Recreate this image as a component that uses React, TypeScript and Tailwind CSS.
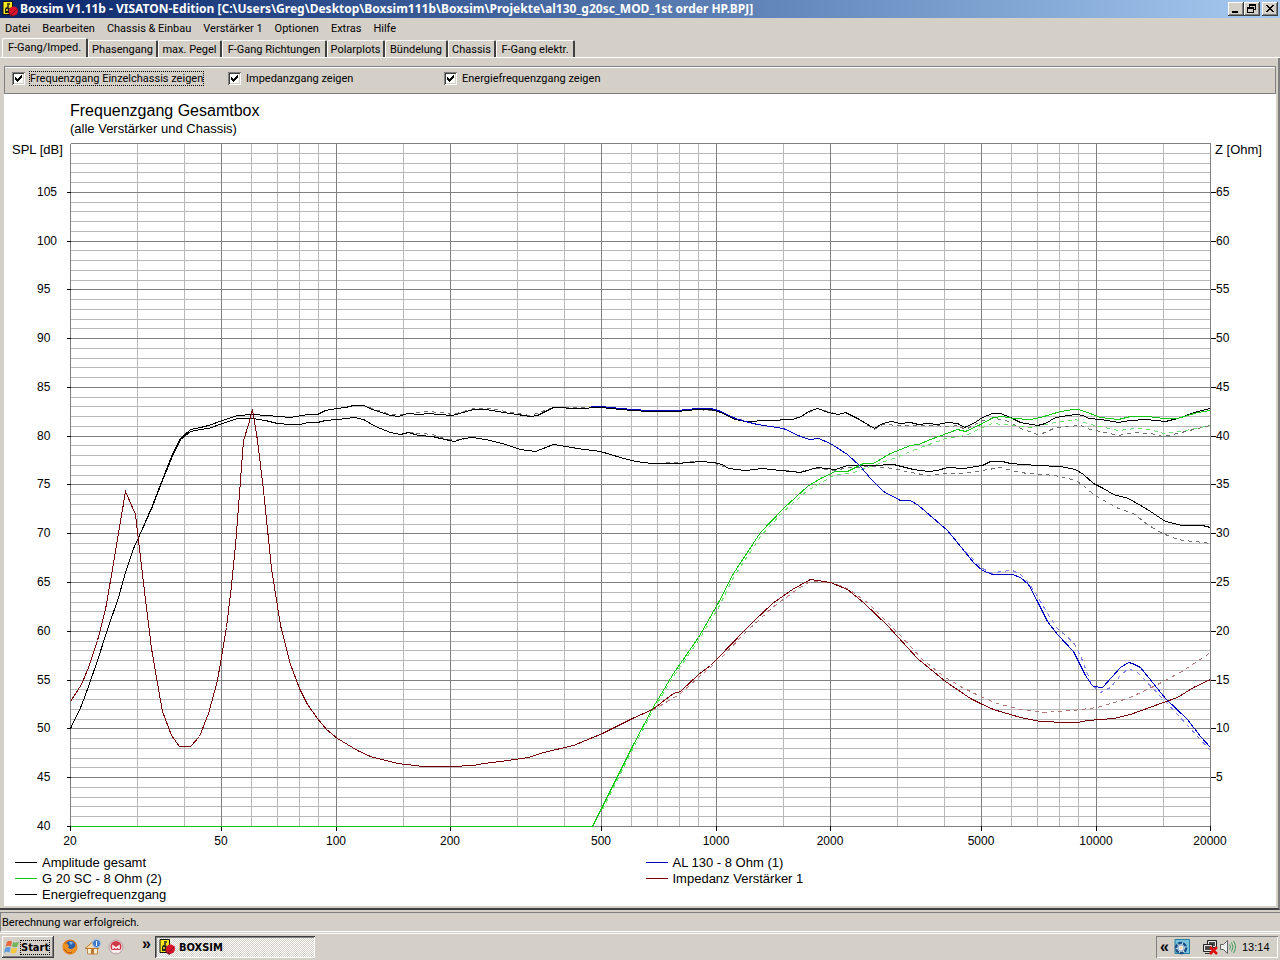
import { useState } from 'react';
import type { ReactNode } from 'react';

const MENU = ['Datei', 'Bearbeiten', 'Chassis & Einbau', 'Verstärker 1', 'Optionen', 'Extras', 'Hilfe'];

const TABS = [
  { label: 'F-Gang/Imped.', width: 'w-[86px]' },
  { label: 'Phasengang', width: 'w-[70px]' },
  { label: 'max. Pegel', width: 'w-[64px]' },
  { label: 'F-Gang Richtungen', width: 'w-[105px]' },
  { label: 'Polarplots', width: 'w-[58px]' },
  { label: 'Bündelung', width: 'w-[63px]' },
  { label: 'Chassis', width: 'w-[48px]' },
  { label: 'F-Gang elektr.', width: 'w-[79px]' },
];

// plot area inside the svg
const LEFT = 70;
const RIGHT = 1210;
const TOP = 143;
const BOTTOM = 826;

const freqToX = (f: number) => Math.round(LEFT + ((RIGHT - LEFT) / 3) * Math.log10(f / 20));
const dbToY = (db: number) => Math.round(BOTTOM - ((BOTTOM - TOP) / 70) * (db - 40));

const MAJOR_FREQS = [20, 50, 100, 200, 500, 1000, 2000, 5000, 10000, 20000];
const MINOR_FREQS = [
  30, 40, 60, 70, 80, 90, 150, 300, 400, 600, 700, 800, 900,
  1500, 3000, 4000, 6000, 7000, 8000, 9000, 15000,
];
const DB_LINES = Array.from({ length: 71 }, (_, i) => 40 + i);

const CURVES = {
  amplitude:
    '70,728 81,705 88,686 97,660 107,629 118,597 125,572 133,548 139,535 152,505 162,479 171,456 180,438 190,429 200,427 208,425 222,420 237,415 252,414 267,415 290,417 307,414 317,414 325,410 337,408 345,407 353,405 363,405 372,409 390,415 398,416 407,413 420,414 427,413 452,415 473,409 485,409 510,413 530,416 537,415 553,407 577,408 600,407 620,409 647,411 677,411 697,409 710,409 718,411 735,419 745,421 768,420 792,419 801,416 808,411 817,408 828,412 838,414 845,412 857,418 874,428 882,423 891,421 900,423 910,422 918,424 928,423 937,424 947,422 957,423 964,427 973,423 982,417 992,413 1000,413 1010,417 1020,422 1037,425 1045,423 1055,417 1075,414 1083,415 1088,418 1100,419 1118,422 1130,420 1145,419 1165,421 1177,418 1197,411 1210,408',
  amplitudeSim:
    '345,407 353,405 363,405 372,408 390,414 400,414 407,413 427,411 440,412 452,414 473,408 490,408 510,412 530,415 553,407 577,407 600,407 620,408 647,411 697,409 718,411 745,421 792,419 817,408 838,414 845,412 857,418 874,429 882,424 900,425 928,425 950,426 957,425 965,429 975,424 982,420 992,418 1003,419 1010,422 1020,428 1037,434 1045,432 1055,427 1080,425 1090,429 1100,431 1118,435 1135,432 1150,433 1163,436 1177,433 1197,428 1210,425',
  energy:
    '70,728 81,705 88,686 97,660 107,629 118,597 125,572 133,548 139,535 152,506 162,480 171,458 180,439 190,431 200,429 208,428 222,423 237,418 252,418 265,420 277,423 290,424 300,424 307,422 317,422 325,420 337,419 354,417 363,419 375,426 390,432 400,434 408,432 418,435 432,436 440,438 454,441 463,438 472,437 485,439 502,443 520,449 535,451 553,444 577,448 600,451 620,457 635,461 652,463 677,463 700,461 713,462 722,464 728,468 745,470 762,468 780,470 800,472 817,467 835,469 847,465 873,465 893,464 913,469 928,471 937,470 947,467 963,468 982,465 990,461 1002,461 1010,463 1037,465 1060,466 1075,469 1083,474 1093,483 1103,488 1113,494 1128,498 1147,509 1165,521 1182,525 1202,525 1210,527',
  energySim:
    '408,432 432,434 440,437 454,440 472,437 485,439 502,443 520,449 535,451 553,444 577,448 600,451 620,457 635,461 652,463 700,461 713,462 728,468 745,470 762,468 780,470 800,471 817,468 835,470 847,467 873,466 893,468 910,472 928,475 945,473 963,473 982,470 1000,467 1015,471 1027,473 1045,474 1060,476 1075,480 1083,485 1093,494 1105,501 1118,508 1133,513 1147,524 1160,532 1172,537 1182,540 1195,541 1210,543',
  woofer:
    '590,406 600,406 620,408 647,410 677,410 697,408 710,408 718,410 735,418 745,421 757,424 783,428 800,436 809,439 818,438 830,443 847,454 860,466 870,478 883,491 900,500 910,500 918,505 947,530 965,552 973,562 982,570 992,574 1012,574 1020,577 1028,584 1037,601 1047,621 1057,634 1073,651 1085,675 1091,684 1093,686 1102,687 1120,667 1128,662 1132,663 1140,667 1165,698 1187,719 1200,736 1210,747',
  wooferSim:
    '965,551 982,568 992,573 1000,571 1012,570 1020,574 1028,582 1037,596 1047,613 1057,628 1073,642 1080,655 1091,684 1100,692 1110,687 1120,675 1128,668 1137,672 1165,701 1187,725 1210,750',
  tweeter:
    '70,826 592,826 602,806 615,780 632,746 652,708 673,673 698,637 717,604 733,573 760,532 783,508 807,486 820,478 835,471 847,471 863,463 873,463 890,453 910,445 918,444 930,439 957,429 965,431 980,424 993,417 1002,416 1013,418 1030,419 1040,417 1060,411 1073,409 1078,409 1087,412 1100,417 1118,419 1130,416 1148,416 1163,418 1177,418 1197,412 1210,410',
  tweeterSim:
    '602,809 632,749 652,711 673,676 698,640 717,609 733,577 760,536 783,511 807,490 835,474 850,473 873,465 893,458 915,449 945,438 965,435 980,428 992,423 1013,425 1030,427 1055,422 1075,419 1090,424 1118,430 1135,428 1150,429 1163,433 1185,430 1210,425',
  impedance:
    '70,701 81,684 88,667 97,640 105,609 113,563 119,527 125,491 135,514 138,540 144,591 151,648 157,683 162,711 171,735 179,746 190,746 199,736 208,713 217,680 226,627 231,585 235,545 239,493 243,440 248,424 252,409 257,440 263,490 271,568 280,625 290,664 299,688 307,704 317,718 326,729 337,738 357,750 370,756 397,763 423,766 450,766 473,765 483,763 500,761 528,757 543,752 573,745 602,733 632,718 652,709 673,693 680,691 698,674 710,665 717,658 747,627 753,621 772,603 792,589 810,579 830,582 847,589 863,602 887,625 917,658 945,681 970,698 982,704 993,709 1020,717 1040,721 1067,722 1077,722 1087,720 1113,718 1130,714 1163,702 1177,697 1193,687 1210,679',
  impedanceSim:
    '652,710 680,693 698,677 717,661 747,630 772,607 795,590 810,581 830,582 847,588 868,603 900,635 923,660 945,677 960,686 982,697 997,703 1020,709 1043,712 1073,710 1097,707 1127,698 1147,689 1163,681 1183,670 1210,652',
};

const RAISED = 'shadow-[inset_-1px_-1px_#404040,inset_1px_1px_#fff,inset_-2px_-2px_#808080]';

function Curve({ points, color, dashed = false }: { points: string; color: string; dashed?: boolean }) {
  return <polyline points={points} fill="none" stroke={color} strokeDasharray={dashed ? '4 4' : undefined} />;
}

function Chart({ chassis, impedance, energy }: { chassis: boolean; impedance: boolean; energy: boolean }) {
  return (
    <svg viewBox="4 139 1272 715" className="block w-full" role="img" aria-label="Frequenzgang Gesamtbox">
      <g transform="translate(0.5 0.5)" shapeRendering="crispEdges">
        {DB_LINES.filter((db) => db % 5 !== 0).map((db) => (
          <line key={db} x1={LEFT} x2={RIGHT} y1={dbToY(db)} y2={dbToY(db)} stroke="#b8b8b8" />
        ))}
        {MINOR_FREQS.map((f) => (
          <line key={f} x1={freqToX(f)} x2={freqToX(f)} y1={TOP} y2={BOTTOM} stroke="#b8b8b8" />
        ))}
        {DB_LINES.filter((db) => db % 5 === 0).map((db) => (
          <line key={db} x1={LEFT} x2={RIGHT} y1={dbToY(db)} y2={dbToY(db)} stroke="#808080" />
        ))}
        {MAJOR_FREQS.map((f) => (
          <line key={f} x1={freqToX(f)} x2={freqToX(f)} y1={TOP} y2={BOTTOM} stroke="#808080" />
        ))}

        {/* axis ticks */}
        {DB_LINES.filter((db) => db % 5 === 0 && db < 110).map((db) => (
          <g key={db} stroke="#000">
            <line x1={LEFT - 4} x2={LEFT} y1={dbToY(db)} y2={dbToY(db)} />
            {db > 40 && <line x1={RIGHT} x2={RIGHT + 5} y1={dbToY(db)} y2={dbToY(db)} />}
          </g>
        ))}
        {MAJOR_FREQS.map((f) => (
          <line key={f} x1={freqToX(f)} x2={freqToX(f)} y1={BOTTOM - 1} y2={BOTTOM + 4} stroke="#000" />
        ))}

        {impedance && <Curve points={CURVES.impedanceSim} color="#b87878" dashed />}
        {chassis && <Curve points={CURVES.tweeterSim} color="#70e070" dashed />}
        {chassis && <Curve points={CURVES.wooferSim} color="#8080e8" dashed />}
        {energy && <Curve points={CURVES.energySim} color="#707070" dashed />}
        <Curve points={CURVES.amplitudeSim} color="#707070" dashed />
        {energy && <Curve points={CURVES.energy} color="#000" />}
        <Curve points={CURVES.amplitude} color="#000" />
        {chassis && <Curve points={CURVES.tweeter} color="#10c810" />}
        {chassis && <Curve points={CURVES.woofer} color="#0000c0" />}
        {impedance && <Curve points={CURVES.impedance} color="#780008" />}
      </g>

      <g className="font-['Liberation_Sans'] text-[12px]">
        <text x={12} y={154} className="text-[13px]">SPL [dB]</text>
        <text x={1215} y={154} className="text-[13px]">Z [Ohm]</text>
        {DB_LINES.filter((db) => db % 5 === 0 && db < 110).map((db) => (
          <text key={db} x={37} y={dbToY(db) + 4}>{db}</text>
        ))}
        {DB_LINES.filter((db) => db % 5 === 0 && db > 40 && db < 110).map((db) => (
          <text key={db} x={1216} y={dbToY(db) + 4}>{db - 40}</text>
        ))}
        {MAJOR_FREQS.map((f) => (
          <text key={f} x={freqToX(f)} y={845} textAnchor="middle">{f}</text>
        ))}
      </g>
    </svg>
  );
}

function CheckOption({ label, checked, onChange, focused = false }: {
  label: string;
  checked: boolean;
  onChange: (value: boolean) => void;
  focused?: boolean;
}) {
  return (
    <label className="flex w-[216px] items-center gap-1">
      <span className="relative size-[13px]">
        <input
          type="checkbox"
          checked={checked}
          onChange={(e) => onChange(e.target.checked)}
          className="block size-[13px] appearance-none bg-white shadow-[inset_1px_1px_#808080,inset_-1px_-1px_#fff,inset_2px_2px_#404040,inset_-2px_-2px_#d4d0c8]"
        />
        {checked && (
          <svg viewBox="0 0 13 13" className="pointer-events-none absolute inset-0 size-[13px]" shapeRendering="crispEdges">
            <path d="M3 5v3l2 2 5-5V2L5 7z" />
          </svg>
        )}
      </span>
      <span className={focused ? 'border border-dotted border-black whitespace-nowrap' : 'border border-transparent whitespace-nowrap'}>
        {label}
      </span>
    </label>
  );
}

function LegendItem({ color, children }: { color: string; children: ReactNode }) {
  return (
    <li className="flex h-4 items-center gap-[5px]">
      <span className={`h-px w-[22px] ${color}`} />
      {children}
    </li>
  );
}

function BoxsimIcon() {
  return (
    <svg viewBox="0 0 16 16" className="size-4 shrink-0">
      <path d="M1 .5h9.500v13H1z" fill="#f4e81c" stroke="#111" />
      <path d="M5 3h3M5 5h2" stroke="#222" strokeWidth="1.500" />
      <path d="M3 8q0-2 2.500-2T8 8l-1 4H3z" fill="#222" />
      <path d="M4 9h2M5 8v2" stroke="#f4e81c" />
      <path d="M6 12l4-4 3 6-3 2z" fill="#7a1020" />
      <circle cx="11.500" cy="10" r="4.500" fill="#d8142c" />
      <path d="M8.500 14.500l7-7" stroke="#8c0c1c" />
    </svg>
  );
}

function WindowsFlag() {
  return (
    <svg viewBox="0 0 16 16" className="size-4 shrink-0">
      <path d="M3 3q2-2 5-.5L7 7.500Q4.500 6 1.500 8z" fill="#e8683c" />
      <path d="M9 3q3 1.500 6-.5l-1.500 5Q11 9 8 7.500z" fill="#74b45c" />
      <path d="M1.200 9Q4 7.200 6.700 8.500L5.500 13.500Q3 12 0 14z" fill="#5c9cdc" />
      <path d="M7.800 8.700q3 1.500 5.500 0L12 13.500q-2.500 2-5.500.3z" fill="#f4c83c" />
    </svg>
  );
}

function FirefoxIcon() {
  return (
    <svg viewBox="0 0 16 16" className="size-4">
      <circle cx="8" cy="8" r="7.500" fill="#e07818" />
      <circle cx="8.500" cy="7" r="5" fill="#2860b0" />
      <path d="M7 3q3-1 4 1l-2 2z" fill="#78b8ec" />
      <path d="M.8 4L3 5l2-.5L7 7 6 8.500Q8 11 11.500 9q3-2 2-5 3 4 .5 8-3 4-8 3-6-2-5.200-11z" fill="#f09020" />
      <path d="M2 10q3 5 8 4" stroke="#b84810" fill="none" />
    </svg>
  );
}

function HomeIcon() {
  return (
    <svg viewBox="0 0 16 16" className="size-4">
      <path d="M2.500 8h10v7h-10z" fill="#f8ecd0" stroke="#c08848" />
      <path d="M0 9.500L7.500 3l6 6.500z" fill="#f4d8a8" stroke="#c07830" />
      <path d="M6 10h3v5H6z" fill="#b87838" />
      <circle cx="11.500" cy="4.500" r="4" fill="#4078c8" stroke="#a8c4e8" />
      <path d="M11.500 2v5" stroke="#fff" />
    </svg>
  );
}

function MailIcon() {
  return (
    <svg viewBox="0 0 16 16" className="size-4">
      <circle cx="8" cy="8" r="7" fill="#f0e0e0" stroke="#b8a0a4" />
      <circle cx="8" cy="7.500" r="5.500" fill="#d03848" />
      <path d="M5 10V7l3 2 3-2v3" fill="none" stroke="#fff" strokeWidth="1.500" />
      <path d="M4 12h8" stroke="#f8f0f0" strokeWidth="2" />
    </svg>
  );
}

function TrayToolIcon() {
  return (
    <svg viewBox="0 0 16 16" className="size-4">
      <path d="M1 .5h14.500v14H1z" fill="#78c4dc" stroke="#287ca0" />
      <circle cx="7" cy="9" r="5" fill="#f4f4f4" stroke="#1c5088" strokeWidth="2.500" strokeDasharray="4 1" />
      <circle cx="7" cy="9" r="3" fill="none" stroke="#88a8c8" />
      <circle cx="7" cy="9" r="1.500" fill="#f0d0b0" />
    </svg>
  );
}

function NetworkIcon() {
  return (
    <svg viewBox="0 0 16 16" className="size-4">
      <path d="M5.500 1.500h9v7h-9z" fill="#484848" stroke="#222" />
      <path d="M6.500 2.500h7v5h-7z" fill="none" stroke="#eee" />
      <path d="M1.500 5.500h9v7h-9z" fill="#484848" stroke="#222" />
      <path d="M2.500 6.500h7v5h-7z" fill="none" stroke="#eee" />
      <path d="M3 14.500h6" stroke="#333" />
      <path d="M8 8l7 7M15 8l-7 7" stroke="#e01010" strokeWidth="2.500" />
    </svg>
  );
}

function SpeakerIcon() {
  return (
    <svg viewBox="0 0 16 16" className="size-4">
      <path d="M.5 5.500h3l4-4v13l-4-4h-3z" fill="#f0f0f0" stroke="#606060" />
      <path d="M9.500 5.500q2 2.500 0 5M11.500 3.500q3 4.500 0 9M13.500 2q4 6 0 12" fill="none" stroke="#409c58" />
    </svg>
  );
}

function CaptionButton({ label, children }: { label: string; children: ReactNode }) {
  return (
    <button type="button" aria-label={label} className={`h-[14px] w-4 bg-[#d4d0c8] ${RAISED}`}>
      <svg viewBox="0 0 16 14" className="h-[14px] w-4" fill="none" stroke="#000" shapeRendering="crispEdges">
        {children}
      </svg>
    </button>
  );
}

export default function App() {
  const [activeTab, setActiveTab] = useState('F-Gang/Imped.');
  const [chassis, setChassis] = useState(true);
  const [impedance, setImpedance] = useState(true);
  const [energy, setEnergy] = useState(true);

  return (
    <div className="flex min-h-screen flex-col bg-[#d4d0c8] font-[Roboto,'Liberation_Sans',sans-serif] text-[11px] leading-[13px] text-black">
      <header className="flex h-[18px] items-center bg-linear-to-r from-[#0a246a] to-[#a6caf0] pr-[2px] pl-[2px] text-white">
        <BoxsimIcon />
        <h1 className="ml-[2px] flex-1 truncate font-['Noto_Sans',sans-serif] text-[12px] leading-[18px] font-bold">
          Boxsim V1.11b - VISATON-Edition [C:\Users\Greg\Desktop\Boxsim111b\Boxsim\Projekte\al130_g20sc_MOD_1st order HP.BPJ]
        </h1>
        <CaptionButton label="Minimieren"><path d="M4 10.500h6M4 9.500h6" /></CaptionButton>
        <CaptionButton label="Wiederherstellen">
          <path d="M5.500 5V2.500h6v5H10M5 3.500h7M3.500 5.500h6v5h-6zM3 6.500h7" />
        </CaptionButton>
        <span className="w-[2px]" />
        <CaptionButton label="Schließen">
          <path d="M4 3l7 7M5 3l7 7M11 3l-7 7M12 3l-7 7" />
        </CaptionButton>
      </header>

      <nav className="flex h-5 items-center">
        {MENU.map((item) => (
          <button key={item} type="button" className="px-[6px] whitespace-nowrap first:pl-[5px]">{item}</button>
        ))}
      </nav>

      <div role="tablist" className="flex h-5 items-end border-b border-white pl-[2px]">
        {TABS.map(({ label, width }) => (
          <button
            key={label}
            type="button"
            role="tab"
            aria-selected={activeTab === label}
            onClick={() => setActiveTab(label)}
            className={`${width} shrink-0 rounded-t-[2px] border-t border-r-2 border-l border-t-white border-r-[#404040] border-l-white text-center whitespace-nowrap ${
              activeTab === label ? 'h-[19px] pb-[2px]' : 'h-[17px]'
            }`}
          >
            {label}
          </button>
        ))}
      </div>

      <main className="flex flex-1 flex-col border-r-2 border-b-2 border-r-[#808080] border-b-[#404040] pt-2 pr-[2px] pb-[2px] pl-1">
        <div className="flex h-[28px] items-start border border-[#808080] pt-1 pl-[7px] shadow-[inset_0_1px_#fff]">
          <CheckOption label="Frequenzgang Einzelchassis zeigen" checked={chassis} onChange={setChassis} focused />
          <CheckOption label="Impedanzgang zeigen" checked={impedance} onChange={setImpedance} />
          <CheckOption label="Energiefrequenzgang zeigen" checked={energy} onChange={setEnergy} />
        </div>

        <section className="flex-1 bg-white font-['Liberation_Sans',Arial,sans-serif]">
          <div className="h-[45px] pt-2 pl-[66px]">
            <h2 className="text-[16px] leading-[18px]">Frequenzgang Gesamtbox</h2>
            <p className="text-[13px] leading-[18px]">(alle Verstärker und Chassis)</p>
          </div>
          <Chart chassis={chassis} impedance={impedance} energy={energy} />
          <ul className="grid grid-cols-2 pb-1 pl-[11px] text-[13px]">
            <LegendItem color="bg-black">Amplitude gesamt</LegendItem>
            <LegendItem color="bg-[#0000c0]">AL 130 - 8 Ohm (1)</LegendItem>
            <LegendItem color="bg-[#10c810]">G 20 SC - 8 Ohm (2)</LegendItem>
            <LegendItem color="bg-[#780008]">Impedanz Verstärker 1</LegendItem>
            <LegendItem color="bg-black">Energiefrequenzgang</LegendItem>
          </ul>
        </section>
      </main>

      <p className="mt-[2px] flex h-5 items-center border-t border-b border-l border-t-[#808080] border-b-white border-l-[#808080] pl-px">
        Berechnung war erfolgreich.
      </p>

      <footer className="mt-px flex h-[27px] items-center border-t border-white px-[2px]">
        <button
          type="button"
          className={`flex h-[22px] w-[52px] items-center bg-[#d4d0c8] pl-[2px] font-['DejaVu_Sans_Condensed','DejaVu_Sans',sans-serif] font-bold ${RAISED}`}
        >
          <WindowsFlag />
          <span className="border border-dotted border-black">Start</span>
        </button>
        <div className="ml-2 flex w-[93px] items-center gap-[7px]">
          <button type="button" aria-label="Firefox"><FirefoxIcon /></button>
          <button type="button" aria-label="Home"><HomeIcon /></button>
          <button type="button" aria-label="Mail"><MailIcon /></button>
          <button type="button" aria-label="Weitere Symbole" className="ml-auto pr-1 pb-2 font-['Liberation_Sans',sans-serif] text-[16px] font-bold">»</button>
        </div>
        <button
          type="button"
          className="flex h-[22px] w-40 items-center gap-1 bg-[repeating-conic-gradient(#fff_0_25%,#d4d0c8_0_50%)] bg-[length:2px_2px] pl-1 font-['DejaVu_Sans_Condensed','DejaVu_Sans',sans-serif] font-bold shadow-[inset_1px_1px_#404040,inset_-1px_-1px_#fff,inset_2px_2px_#808080]"
        >
          <BoxsimIcon />
          BOXSIM
        </button>
        <div className="ml-auto flex h-[22px] w-[122px] items-center pl-1 shadow-[inset_1px_1px_#808080,inset_-1px_-1px_#fff]">
          <button type="button" aria-label="Symbole einblenden" className="w-[14px] pb-[2px] text-left font-['Liberation_Sans',sans-serif] text-[16px] font-bold">«</button>
          <TrayToolIcon />
          <span className="w-3" />
          <NetworkIcon />
          <span className="w-[2px]" />
          <SpeakerIcon />
          <time className="ml-[6px] font-['Liberation_Sans',sans-serif]">13:14</time>
        </div>
      </footer>
    </div>
  );
}
